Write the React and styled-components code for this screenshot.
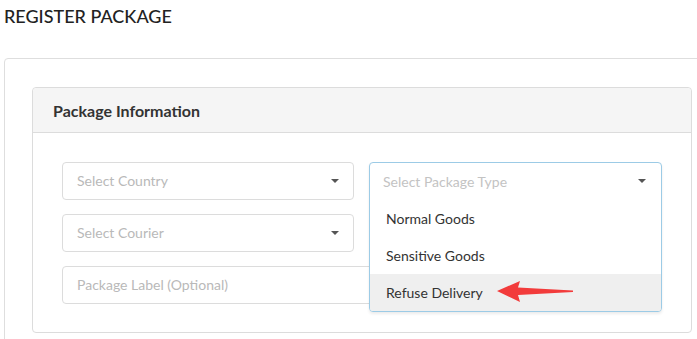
import React from "react";
import styled, { createGlobalStyle } from "styled-components";

const Global = createGlobalStyle`
  html, body { margin: 0; padding: 0; background: #fff; overflow: hidden; }
  body { font-family: Lato, "Open Sans", Arial, sans-serif; color: #333; }
  * { box-sizing: border-box; }
`;

const Page = styled.div`
  padding: 0 0 0 4px;
  width: 730px;
`;

const Title = styled.h1`
  margin: 0;
  padding-top: 5px;
  font-size: 18px;
  line-height: 22px;
  font-weight: 500;
  color: #222;
  letter-spacing: 0;
`;

const OuterPanel = styled.div`
  margin-top: 31px;
  width: 722px;
  border: 1px solid #dedede;
  border-radius: 4px;
  padding: 28px 28px 28px 27px;
`;

const InnerPanel = styled.div`
  width: 660px;
  border: 1px solid #dcdcdc;
  border-radius: 4px;
`;

const PanelHeader = styled.div`
  height: 45px;
  display: flex;
  align-items: center;
  padding: 1px 20px 0;
  background: #f5f5f5;
  border-bottom: 1px solid #dcdcdc;
  border-radius: 4px 4px 0 0;
  font-size: 16px;
  font-weight: 700;
  color: #333;
`;

const PanelBody = styled.div`
  padding: 29px 29px 28px 29px;
  display: grid;
  grid-template-columns: 292px 293px;
  column-gap: 15px;
  row-gap: 14px;
`;

const Field = styled.div`
  position: relative;
  height: 38px;
  border: 1px solid #dcdcdc;
  border-radius: 4px;
  display: flex;
  align-items: center;
  padding: 0 14px 1px;
  font-size: 14px;
  color: #b9b9b9;
  grid-column: ${(p) => (p.$wide ? "1 / -1" : "auto")};
  background: #fff;
`;

const Placeholder = styled.span`
  flex: 1;
`;

const Caret = styled.span`
  width: 0;
  height: 0;
  border-left: 4px solid transparent;
  border-right: 4px solid transparent;
  border-top: 4px solid #555;
  margin-right: ${(p) => p.$offset || 0}px;
`;

const SelectSlot = styled.div`
  position: relative;
  height: 38px;
`;

const OpenBox = styled.div`
  position: absolute;
  top: 0;
  left: 0;
  right: 0;
  z-index: 5;
  background: #fff;
  border: 1px solid #9ccbe6;
  border-radius: 4px;
  box-shadow: 0 2px 3px rgba(0, 0, 0, 0.08);
  overflow: hidden;
`;

const OpenHead = styled.div`
  height: 37px;
  display: flex;
  align-items: center;
  padding: 0 14px 1px 13px;
  font-size: 14px;
  color: #c3c3c3;
`;

const Option = styled.div`
  position: relative;
  height: 37px;
  display: flex;
  align-items: center;
  padding: 0 16px;
  font-size: 14px;
  color: #333;
  background: ${(p) => (p.$active ? "#efefef" : "#fff")};
`;

const ArrowMark = styled.svg`
  position: absolute;
  left: 120px;
  top: 2px;
  width: 90px;
  height: 30px;
`;

export default function App() {
  return (
    <>
      <Global />
      <Page>
        <Title>REGISTER PACKAGE</Title>
        <OuterPanel>
          <InnerPanel>
            <PanelHeader>Package Information</PanelHeader>
            <PanelBody>
              <Field>
                <Placeholder>Select Country</Placeholder>
                <Caret />
              </Field>
              <SelectSlot>
                <OpenBox>
                  <OpenHead>
                    <Placeholder>Select Package Type</Placeholder>
                    <Caret $offset={1} />
                  </OpenHead>
                  <Option>Normal Goods</Option>
                  <Option>Sensitive Goods</Option>
                  <Option $active>
                    Refuse Delivery
                    <ArrowMark viewBox="0 0 90 30">
                      <polygon
                        points="7,15 30,5 28,11.5 83,14.5 83,16 28,19 30,26"
                        fill="#f23b3b"
                      />
                    </ArrowMark>
                  </Option>
                </OpenBox>
              </SelectSlot>
              <Field>
                <Placeholder>Select Courier</Placeholder>
                <Caret />
              </Field>
              <div />
              <Field $wide>
                <Placeholder>Package Label (Optional)</Placeholder>
              </Field>
            </PanelBody>
          </InnerPanel>
        </OuterPanel>
      </Page>
    </>
  );
}
